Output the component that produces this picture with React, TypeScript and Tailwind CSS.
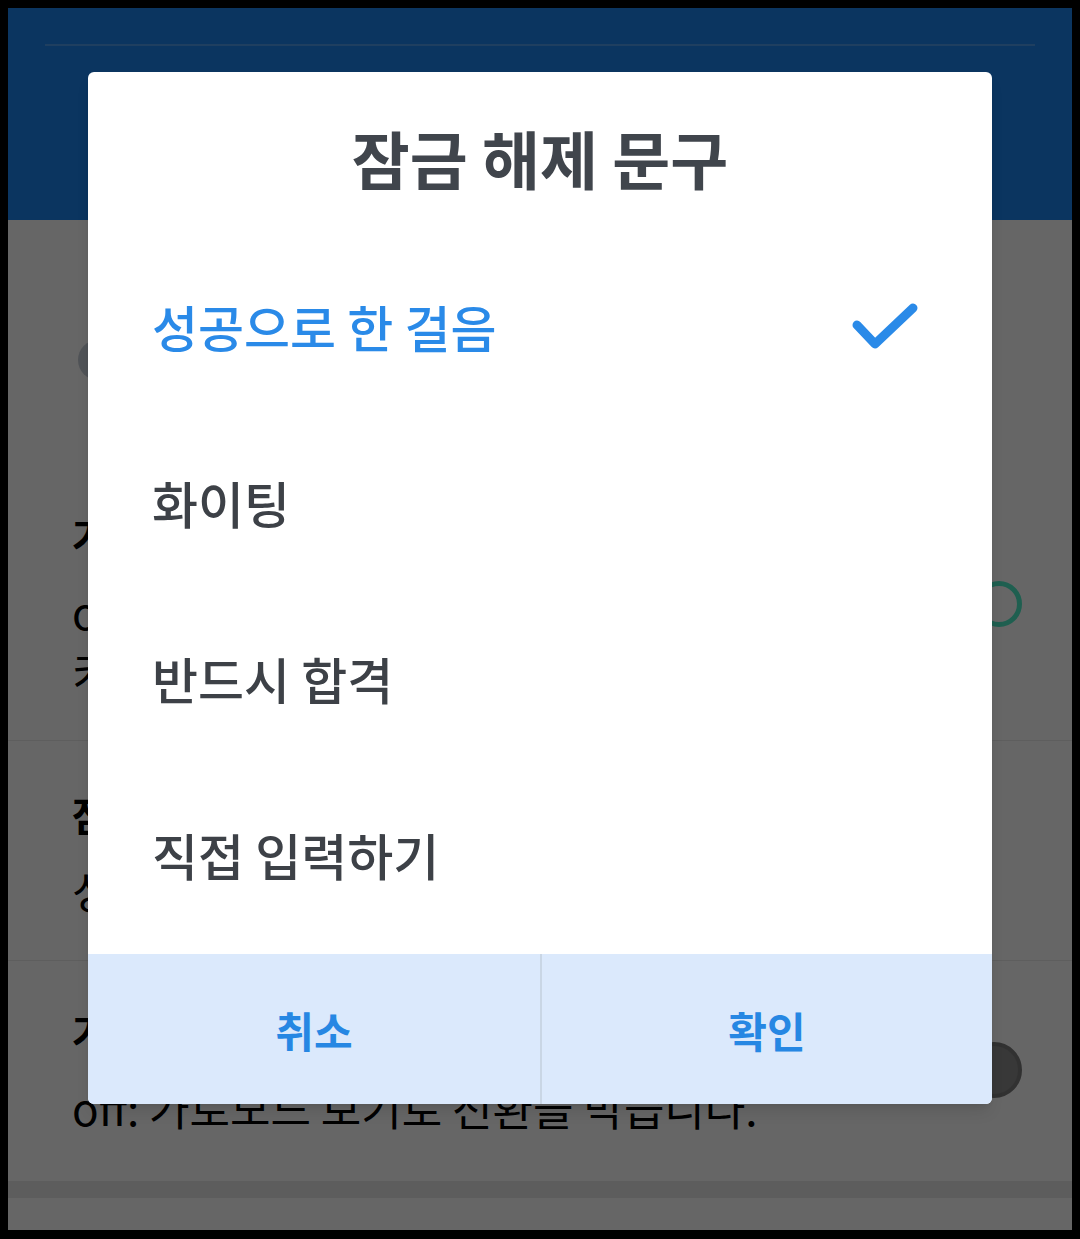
import { User } from 'lucide-react'

const phrases = ['성공으로 한 걸음', '화이팅', '반드시 합격', '직접 입력하기']

export default function App() {
  const selected = 0

  return (
    <div className="h-[1239px] w-[1080px] bg-black pt-2 pl-2 pr-2 pb-[9px] font-['Noto_Sans_CJK_KR','Noto_Sans',sans-serif]">
      <div className="relative h-full overflow-hidden bg-white">
        {/* Settings page behind the dialog */}
        <header className="h-[212px] bg-[#1c84f0] px-[37px] pt-9">
          <div className="h-[2px] bg-[#4e9df0]" />
        </header>

        <div className="h-[250px] pl-[70px] pt-[120px]">
          <div className="flex h-[40px] w-[40px] items-center justify-center rounded-full bg-[#c9d0d9]">
            <User className="h-6 w-6 text-[#9aa3ae]" />
          </div>
        </div>

        <div className="flex items-center justify-between border-b border-[#ebebeb] pl-16 pr-[50px] pt-[37px] pb-[39px]">
          <div className="text-black">
            <div className="text-[40px] font-bold leading-[56px]">가로모드 화면 고정</div>
            <div className="mt-[18px] text-[44px] leading-[60px]">
              <div>on: 화면을 가로로 고정합니다.</div>
              <div>키보드 사용 시 편리합니다.</div>
            </div>
          </div>
          <div className="h-[46px] w-[46px] rounded-full border-[5px] border-[#4eedc8] bg-transparent" />
        </div>

        <div className="border-b border-[#ebebeb] pl-16 pr-[50px] pt-[45px] pb-[40px] text-black">
          <div className="text-[40px] font-bold leading-[56px]">잠금 해제 문구</div>
          <div className="mt-[18px] text-[44px] leading-[60px]">성공으로 한 걸음</div>
        </div>

        <div className="flex items-center justify-between pl-16 pr-[50px] pt-[42px] pb-[44px]">
          <div className="text-black">
            <div className="text-[40px] font-bold leading-[56px]">가로모드 보기</div>
            <div className="mt-[18px] whitespace-nowrap text-[44px] leading-[60px]">off: 가로모드 보기로 전환을 막습니다.</div>
          </div>
          <div className="h-[56px] w-[56px] rounded-full border-[4px] border-[#7c7c7c] bg-[#8c8c8c]" />
        </div>

        <div className="h-[17px] bg-[#e8e8e8]" />

        {/* Dim overlay + dialog */}
        <div className="absolute inset-0 flex justify-center bg-black/60 pt-[64px]">
          <div className="flex h-[1032px] w-[904px] flex-col overflow-hidden rounded-[6px] bg-white shadow-lg">
            <div className="h-[166px] pt-[48px] text-center text-[63px] font-bold leading-[74px] text-[#40454c]">
              잠금 해제 문구
            </div>

            {phrases.map((p, i) => (
              <div key={p} className="flex h-[176px] items-center justify-between pl-16 pr-[72px]">
                <span className={`text-[50px] font-medium leading-[60px] ${i === selected ? 'text-[#2a8ae8]' : 'text-[#3d4147]'}`}>
                  {p}
                </span>
                {i === selected && (
                  <svg width="70" height="52" viewBox="0 0 70 52" fill="none">
                    <path d="M7 25 L25 44 L63 8" stroke="#2a8ae8" strokeWidth="9" strokeLinecap="round" strokeLinejoin="round" />
                  </svg>
                )}
              </div>
            ))}

            <div className="mt-3 grid h-[150px] grid-cols-2 bg-[#dbe9fc]">
              <button className="text-[42px] font-bold text-[#2687e3]">취소</button>
              <button className="border-l-2 border-[#c9d6e5] text-[42px] font-bold text-[#2687e3]">확인</button>
            </div>
          </div>
        </div>
      </div>
    </div>
  )
}
